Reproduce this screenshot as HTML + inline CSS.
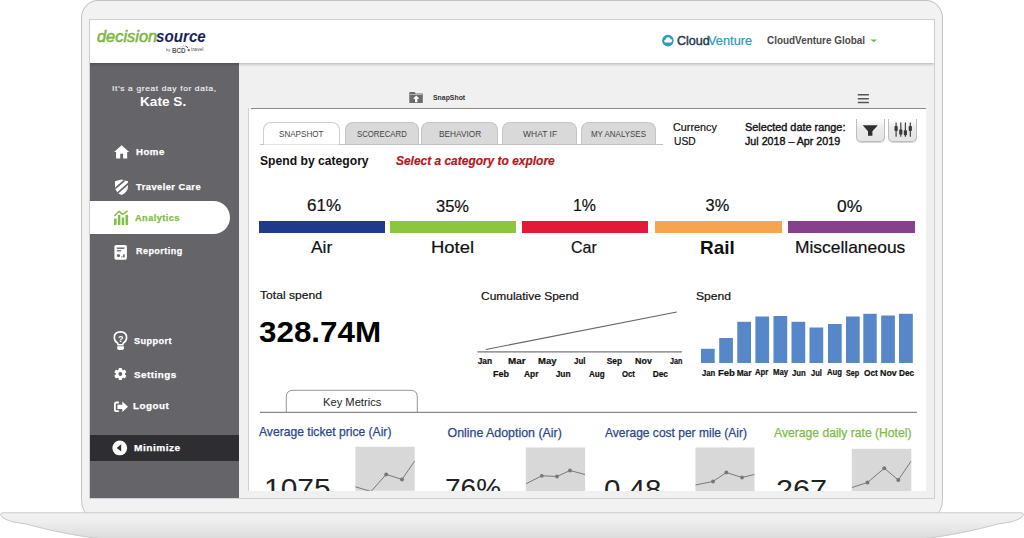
<!DOCTYPE html>
<html lang="en"><head><meta charset="utf-8"><title>DecisionSource Analytics</title>
<style>
html,body{margin:0;padding:0;background:#fff;}
body{width:1024px;height:538px;overflow:hidden;position:relative;font-family:"Liberation Sans",sans-serif;}
.abs{position:absolute;}
.t{position:absolute;white-space:nowrap;line-height:1;transform-origin:0 0;font-family:"Liberation Sans",sans-serif;}
#frame{position:absolute;left:81px;top:0;width:862px;height:513.5px;box-sizing:border-box;border:1px solid #c4c4c4;border-radius:17px 17px 7px 7px / 18px 18px 15px 15px;background:#f2f2f2;}
#screen{position:absolute;z-index:0;left:90px;top:20px;width:844px;height:478.4px;background:#f0f0f1;overflow:hidden;box-shadow:0 0 0 1px #cfcfcf;}
#hdr{position:absolute;left:0;top:0;width:100%;height:42.6px;background:#fff;box-shadow:0 1px 3px rgba(0,0,0,.28);z-index:3;}
#side{position:absolute;left:0;top:42.6px;width:148.6px;height:437px;background:#656469;z-index:2;}
#pill{position:absolute;left:0;top:138.2px;width:140px;height:33px;background:#fff;border-radius:0 17px 17px 0;}
#mini{position:absolute;left:0;top:372.7px;width:148.6px;height:25.6px;background:#2e2d31;}
#panel{position:absolute;left:157.5px;top:88px;width:678.7px;height:382.6px;background:#fff;border-left:1px solid #d2d2d2;box-sizing:border-box;overflow:hidden;}
#ptop{position:absolute;left:161px;top:88px;width:675.2px;height:1px;background:#8a8a8a;}
.tab{position:absolute;top:122px;height:22.6px;box-sizing:border-box;background:#d9d9d9;border:1px solid #c4c4c4;border-bottom:none;border-radius:8px 8px 0 0;}
.tab.on{background:#fff;border-color:#cfcfcf;}
.bar{position:absolute;top:221px;height:11.7px;}
.spk{position:absolute;background:#d8d8d8;}
.btn{position:absolute;top:118.5px;height:23.2px;box-sizing:border-box;border:1px solid #bdbdbd;border-top:none;border-radius:0 0 5px 5px;background:linear-gradient(#fff,#ebebeb 40%,#e4e4e4);box-shadow:0 1px 0 #d6d6d6;}
</style></head><body>
<div id="frame"></div>
<svg class="abs" style="left:0;top:505px" width="1024" height="33" viewBox="0 505 1024 33">
<defs><linearGradient id="bg" gradientUnits="userSpaceOnUse" x1="0" y1="513" x2="0" y2="538"><stop offset="0" stop-color="#f2f2f2"/><stop offset="0.35" stop-color="#eeeeee"/><stop offset="1" stop-color="#dcdcdc"/></linearGradient></defs>
<path d="M0.5,514.8 Q0.3,512.8 3,512.8 L1021,512.8 Q1023.7,512.8 1023.5,514.8 C1021,519.5 1012,522.5 999,523.7 C974,530.7 949,535.5 929,538 L918,540 L106,540 L95,538 C75,535.5 50,530.7 25,523.7 C12,522.5 3,519.5 0.5,514.8 Z" fill="url(#bg)" stroke="#c9c9c9" stroke-width="1"/>
</svg>
<div id="screen">
 <div id="hdr"></div>
 <div id="side"><div id="pill"></div><div id="mini"></div></div>
 <div id="panel"></div><div id="ptop"></div>
</div>
<!-- tabs -->
<div class="tab on" style="left:263px;width:76.5px"></div>
<div class="tab" style="left:344.5px;width:74.5px"></div>
<div class="tab" style="left:421px;width:76.5px"></div>
<div class="tab" style="left:502px;width:75px"></div>
<div class="tab" style="left:581px;width:75px"></div>
<div class="abs" style="left:260px;top:144.2px;width:403px;height:1px;background:#c2c2c2"></div>
<div class="abs" style="left:264px;top:144.2px;width:74.5px;height:1px;background:#e4e4e4"></div>
<!-- buttons -->
<div class="btn" style="left:856.3px;width:28.7px"></div>
<div class="btn" style="left:888.2px;width:28.9px"></div>
<!-- category bars -->
<div class="bar" style="left:258.8px;width:126.4px;background:#1f3a8c"></div>
<div class="bar" style="left:389.5px;width:126.8px;background:#8cc63f"></div>
<div class="bar" style="left:522px;width:125.6px;background:#e21a38"></div>
<div class="bar" style="left:655.2px;width:126.8px;background:#f7a44e"></div>
<div class="bar" style="left:788px;width:126.8px;background:#86408c"></div>
<!-- charts -->
<svg class="abs" style="left:0;top:0" width="1024" height="538" viewBox="0 0 1024 538">
 <line x1="477.5" y1="351.9" x2="682" y2="351.9" stroke="#777" stroke-width="1.25"/>
 <line x1="485.8" y1="349.5" x2="676.8" y2="312" stroke="#666" stroke-width="1.05"/>
 <g fill="#5687c8">
  <rect x="701" y="348.8" width="13.7" height="14.2"/>
  <rect x="719.2" y="338" width="13.7" height="25.0"/>
  <rect x="737.3" y="321.8" width="13.7" height="41.2"/>
  <rect x="755.4" y="316.5" width="13.7" height="46.5"/>
  <rect x="773.5" y="316" width="13.7" height="47.0"/>
  <rect x="791.5" y="321.8" width="13.7" height="41.2"/>
  <rect x="809.5" y="327.5" width="13.7" height="35.5"/>
  <rect x="828" y="324" width="13.7" height="39.0"/>
  <rect x="846" y="316.5" width="13.7" height="46.5"/>
  <rect x="863.3" y="313.8" width="13.4" height="49.2"/>
  <rect x="881.2" y="315.5" width="13.7" height="47.5"/>
  <rect x="899" y="313.8" width="13.8" height="49.2"/>
 </g>
 <!-- key metrics tab + line -->
 <path d="M286.3,412 L286.3,397 Q286.3,390.3 293,390.3 L410.5,390.3 Q417.3,390.3 417.3,397 L417.3,412" fill="none" stroke="#8a8a8a" stroke-width="0.9"/>
 <line x1="260" y1="412.3" x2="917" y2="412.3" stroke="#6f6f6f" stroke-width="1"/>
</svg>
<!-- sparklines -->
<svg class="abs" style="left:0;top:0" width="1024" height="490.6" viewBox="0 0 1024 490.6">
 <rect x="355.4" y="446.8" width="59.3" height="44" fill="#d8d8d8"/>
 <rect x="525.8" y="447.5" width="59.3" height="44" fill="#d8d8d8"/>
 <rect x="695.5" y="447.5" width="59" height="44" fill="#d8d8d8"/>
 <rect x="851.8" y="448.8" width="59.5" height="44" fill="#d8d8d8"/>
 <g fill="none" stroke="#6e6e6e" stroke-width="0.9">
  <polyline points="355.4,486.8 371,491.5 386.2,474.4 402,479.4 414.7,461"/>
  <polyline points="526,483.8 541.8,475.8 557,476.5 570,470.5 585,474.5"/>
  <polyline points="695.5,485 713,481.5 726.3,472.5 742,477.5 754.5,474.5"/>
  <polyline points="852,487.5 867.5,482.5 884.3,468.3 898.3,480 911,461.3"/>
 </g>
 <g fill="#777">
  <circle cx="386.2" cy="474.4" r="2"/><circle cx="402" cy="479.4" r="2"/>
  <circle cx="541.8" cy="475.8" r="1.9"/><circle cx="557" cy="476.5" r="1.9"/><circle cx="570" cy="470.5" r="1.9"/>
  <circle cx="713" cy="481.5" r="1.9"/><circle cx="726.3" cy="472.5" r="1.9"/><circle cx="742" cy="477.5" r="1.9"/>
  <circle cx="867.5" cy="482.5" r="1.9"/><circle cx="884.3" cy="468.3" r="2"/><circle cx="898.3" cy="480" r="2"/>
 </g>
</svg>
<div class="abs" id="textclip" style="left:0;top:0;width:1024px;height:490.6px;overflow:hidden">
<span id="t0" class="t" style="left:96.65px;top:28.30px;font-size:16.3px;transform:scaleX(1.0070);font-style:italic;color:#7ab642;-webkit-text-stroke:0.55px #7ab642">decision</span>
<span id="t1" class="t" style="left:156.25px;top:28.30px;font-size:16.3px;transform:scaleX(0.9327);font-style:italic;font-weight:bold;color:#1c1f5c">source</span>
<span id="t2" class="t" style="left:166.28px;top:48.04px;font-size:4.2px;transform:scaleX(0.9506);color:#555">by</span>
<span id="t3" class="t" style="left:172.24px;top:47.80px;font-size:6.5px;transform:scaleX(0.9716);font-weight:bold;color:#5a5a5a">BCD</span>
<span id="t4" class="t" style="left:190.62px;top:48.11px;font-size:4.6px;transform:scaleX(1.1102);color:#555">travel</span>
<span id="t5" class="t" style="left:676.68px;top:34.20px;font-size:13px;transform:scaleX(0.9640);color:#1f3b4d;-webkit-text-stroke:0.45px #1f3b4d">Cloud</span>
<span id="t6" class="t" style="left:708.48px;top:34.20px;font-size:13px;transform:scaleX(0.9867);color:#2a9ab3;-webkit-text-stroke:0.2px #2a9ab3">Venture</span>
<span id="t7" class="t" style="left:766.74px;top:35.78px;font-size:10.3px;transform:scaleX(0.9624);font-weight:bold;color:#4a4a4a">CloudVenture Global</span>
<span id="t8" class="t" style="left:111.78px;top:85.11px;font-size:7.9px;transform:scaleX(1.0651);color:#f2f2f2;letter-spacing:0.6px;-webkit-text-stroke:0.15px #f2f2f2">It&rsquo;s a great day for data,</span>
<span id="t9" class="t" style="left:140.28px;top:95.00px;font-size:13px;transform:scaleX(1.0476);font-weight:bold;color:#fff">Kate S.</span>
<span id="t10" class="t" style="left:135.74px;top:147.50px;font-size:9.1px;transform:scaleX(1.0625);font-weight:bold;color:#fff;letter-spacing:0.45px;-webkit-text-stroke:0.25px #fff">Home</span>
<span id="t11" class="t" style="left:135.74px;top:182.50px;font-size:9.1px;transform:scaleX(1.0254);font-weight:bold;color:#fff;letter-spacing:0.45px;-webkit-text-stroke:0.25px #fff">Traveler Care</span>
<span id="t12" class="t" style="left:135.09px;top:213.50px;font-size:9.1px;transform:scaleX(1.0093);font-weight:bold;color:#82bd45;letter-spacing:0.45px;-webkit-text-stroke:0.25px #82bd45">Analytics</span>
<span id="t13" class="t" style="left:135.94px;top:246.60px;font-size:9.1px;transform:scaleX(0.9913);font-weight:bold;color:#fff;letter-spacing:0.45px;-webkit-text-stroke:0.25px #fff">Reporting</span>
<span id="t14" class="t" style="left:134.44px;top:337.10px;font-size:9.1px;transform:scaleX(1.0007);font-weight:bold;color:#fff;letter-spacing:0.45px;-webkit-text-stroke:0.25px #fff">Support</span>
<span id="t15" class="t" style="left:133.84px;top:371.00px;font-size:9.1px;transform:scaleX(1.0823);font-weight:bold;color:#fff;letter-spacing:0.45px;-webkit-text-stroke:0.25px #fff">Settings</span>
<span id="t16" class="t" style="left:133.44px;top:401.50px;font-size:9.1px;transform:scaleX(1.0794);font-weight:bold;color:#fff;letter-spacing:0.45px;-webkit-text-stroke:0.25px #fff">Logout</span>
<span id="t17" class="t" style="left:134.09px;top:443.50px;font-size:9.1px;transform:scaleX(1.1122);font-weight:bold;color:#fff;letter-spacing:0.45px;-webkit-text-stroke:0.25px #fff">Minimize</span>
<span id="t18" class="t" style="left:433.31px;top:94.31px;font-size:7.2px;transform:scaleX(0.9582);font-weight:bold;color:#333">SnapShot</span>
<span id="t19" class="t" style="left:278.60px;top:129.84px;font-size:8.7px;transform:scaleX(0.9304);color:#444">SNAPSHOT</span>
<span id="t20" class="t" style="left:356.95px;top:129.84px;font-size:8.7px;transform:scaleX(0.8963);color:#444">SCORECARD</span>
<span id="t21" class="t" style="left:438.65px;top:129.84px;font-size:8.7px;transform:scaleX(0.9529);color:#444">BEHAVIOR</span>
<span id="t22" class="t" style="left:522.60px;top:129.84px;font-size:8.7px;transform:scaleX(0.9765);color:#444">WHAT IF</span>
<span id="t23" class="t" style="left:590.95px;top:129.84px;font-size:8.7px;transform:scaleX(0.9153);color:#444">MY ANALYSES</span>
<span id="t24" class="t" style="left:673.35px;top:122.03px;font-size:11.3px;transform:scaleX(0.9570);color:#111;-webkit-text-stroke:0.2px #111">Currency</span>
<span id="t25" class="t" style="left:673.75px;top:136.03px;font-size:11.3px;transform:scaleX(0.9091);color:#111;-webkit-text-stroke:0.2px #111">USD</span>
<span id="t26" class="t" style="left:744.85px;top:122.03px;font-size:11.3px;transform:scaleX(0.9631);color:#111;-webkit-text-stroke:0.4px #111">Selected date range:</span>
<span id="t27" class="t" style="left:745.40px;top:136.03px;font-size:11.3px;transform:scaleX(0.9461);color:#111;-webkit-text-stroke:0.4px #111">Jul 2018 &ndash; Apr 2019</span>
<span id="t28" class="t" style="left:259.98px;top:154.30px;font-size:13px;transform:scaleX(0.9339);font-weight:bold;color:#111">Spend by category</span>
<span id="t29" class="t" style="left:396.15px;top:154.63px;font-size:12.6px;transform:scaleX(0.9485);font-weight:bold;font-style:italic;color:#b8151b;-webkit-text-stroke:0.2px #b8151b">Select a category to explore</span>
<span id="t30" class="t" style="left:306.94px;top:196.72px;font-size:16.4px;transform:scaleX(1.0389);color:#111;-webkit-text-stroke:0.2px #111">61%</span>
<span id="t31" class="t" style="left:436.19px;top:197.92px;font-size:16.4px;transform:scaleX(1.0072);color:#111;-webkit-text-stroke:0.2px #111">35%</span>
<span id="t32" class="t" style="left:573.09px;top:196.72px;font-size:16.4px;transform:scaleX(0.9729);color:#111;-webkit-text-stroke:0.2px #111">1%</span>
<span id="t33" class="t" style="left:705.54px;top:196.92px;font-size:16.4px;transform:scaleX(1.0000);color:#111;-webkit-text-stroke:0.2px #111">3%</span>
<span id="t34" class="t" style="left:837.04px;top:197.72px;font-size:16.4px;transform:scaleX(1.0637);color:#111;-webkit-text-stroke:0.2px #111">0%</span>
<span id="t35" class="t" style="left:310.84px;top:239.95px;font-size:16.6px;transform:scaleX(1.0500);color:#111;-webkit-text-stroke:0.2px #111">Air</span>
<span id="t36" class="t" style="left:431.34px;top:239.95px;font-size:16.6px;transform:scaleX(1.1118);color:#111;-webkit-text-stroke:0.2px #111">Hotel</span>
<span id="t37" class="t" style="left:571.19px;top:239.95px;font-size:16.6px;transform:scaleX(0.9692);color:#111;-webkit-text-stroke:0.2px #111">Car</span>
<span id="t38" class="t" style="left:699.84px;top:237.72px;font-size:19px;transform:scaleX(0.9941);font-weight:bold;color:#111">Rail</span>
<span id="t39" class="t" style="left:794.84px;top:239.95px;font-size:16.6px;transform:scaleX(1.0486);color:#111;-webkit-text-stroke:0.2px #111">Miscellaneous</span>
<span id="t40" class="t" style="left:259.99px;top:289.38px;font-size:11.6px;transform:scaleX(1.0441);color:#111;-webkit-text-stroke:0.2px #111">Total spend</span>
<span id="t41" class="t" style="left:481.04px;top:289.68px;font-size:11.6px;transform:scaleX(1.0320);color:#111;-webkit-text-stroke:0.2px #111">Cumulative Spend</span>
<span id="t42" class="t" style="left:696.34px;top:289.68px;font-size:11.6px;transform:scaleX(1.0438);color:#111;-webkit-text-stroke:0.2px #111">Spend</span>
<span id="t43" class="t" style="left:258.95px;top:318.22px;font-size:28.8px;transform:scaleX(1.0899);font-weight:bold;color:#000">328.74M</span>
<span id="t44" class="t" style="left:477.66px;top:357.49px;font-size:8.4px;transform:scaleX(1.0000);font-weight:bold;color:#111;-webkit-text-stroke:0.2px #111">Jan</span>
<span id="t45" class="t" style="left:507.66px;top:357.49px;font-size:8.4px;transform:scaleX(1.1716);font-weight:bold;color:#111;-webkit-text-stroke:0.2px #111">Mar</span>
<span id="t46" class="t" style="left:538.41px;top:357.49px;font-size:8.4px;transform:scaleX(1.1343);font-weight:bold;color:#111;-webkit-text-stroke:0.2px #111">May</span>
<span id="t47" class="t" style="left:573.66px;top:357.49px;font-size:8.4px;transform:scaleX(0.9503);font-weight:bold;color:#111;-webkit-text-stroke:0.2px #111">Jul</span>
<span id="t48" class="t" style="left:606.66px;top:357.49px;font-size:8.4px;transform:scaleX(1.0000);font-weight:bold;color:#111;-webkit-text-stroke:0.2px #111">Sep</span>
<span id="t49" class="t" style="left:635.16px;top:357.49px;font-size:8.4px;transform:scaleX(1.0667);font-weight:bold;color:#111;-webkit-text-stroke:0.2px #111">Nov</span>
<span id="t50" class="t" style="left:669.91px;top:357.49px;font-size:8.4px;transform:scaleX(0.8585);font-weight:bold;color:#111;-webkit-text-stroke:0.2px #111">Jan</span>
<span id="t51" class="t" style="left:493.16px;top:370.49px;font-size:8.4px;transform:scaleX(1.0714);font-weight:bold;color:#111;-webkit-text-stroke:0.2px #111">Feb</span>
<span id="t52" class="t" style="left:524.41px;top:370.49px;font-size:8.4px;transform:scaleX(1.0012);font-weight:bold;color:#111;-webkit-text-stroke:0.2px #111">Apr</span>
<span id="t53" class="t" style="left:555.66px;top:370.49px;font-size:8.4px;transform:scaleX(1.0000);font-weight:bold;color:#111;-webkit-text-stroke:0.2px #111">Jun</span>
<span id="t54" class="t" style="left:588.66px;top:370.49px;font-size:8.4px;transform:scaleX(0.9627);font-weight:bold;color:#111;-webkit-text-stroke:0.2px #111">Aug</span>
<span id="t55" class="t" style="left:622.16px;top:370.49px;font-size:8.4px;transform:scaleX(0.9286);font-weight:bold;color:#111;-webkit-text-stroke:0.2px #111">Oct</span>
<span id="t56" class="t" style="left:652.66px;top:370.49px;font-size:8.4px;transform:scaleX(1.0000);font-weight:bold;color:#111;-webkit-text-stroke:0.2px #111">Dec</span>
<span id="t57" class="t" style="left:702.17px;top:368.97px;font-size:8.3px;transform:scaleX(0.9286);font-weight:bold;color:#111;-webkit-text-stroke:0.2px #111">Jan</span>
<span id="t58" class="t" style="left:718.17px;top:368.97px;font-size:8.3px;transform:scaleX(1.1480);font-weight:bold;color:#111;-webkit-text-stroke:0.2px #111">Feb</span>
<span id="t59" class="t" style="left:736.67px;top:368.97px;font-size:8.3px;transform:scaleX(1.0000);font-weight:bold;color:#111;-webkit-text-stroke:0.2px #111">Mar</span>
<span id="t60" class="t" style="left:755.17px;top:367.97px;font-size:8.3px;transform:scaleX(0.9286);font-weight:bold;color:#111;-webkit-text-stroke:0.2px #111">Apr</span>
<span id="t61" class="t" style="left:773.42px;top:367.97px;font-size:8.3px;transform:scaleX(0.9385);font-weight:bold;color:#111;-webkit-text-stroke:0.2px #111">May</span>
<span id="t62" class="t" style="left:792.42px;top:368.97px;font-size:8.3px;transform:scaleX(0.9346);font-weight:bold;color:#111;-webkit-text-stroke:0.2px #111">Jun</span>
<span id="t63" class="t" style="left:811.17px;top:368.97px;font-size:8.3px;transform:scaleX(0.9091);font-weight:bold;color:#111;-webkit-text-stroke:0.2px #111">Jul</span>
<span id="t64" class="t" style="left:826.92px;top:367.97px;font-size:8.3px;transform:scaleX(0.9344);font-weight:bold;color:#111;-webkit-text-stroke:0.2px #111">Aug</span>
<span id="t65" class="t" style="left:845.92px;top:368.97px;font-size:8.3px;transform:scaleX(0.8679);font-weight:bold;color:#111;-webkit-text-stroke:0.2px #111">Sep</span>
<span id="t66" class="t" style="left:863.67px;top:368.97px;font-size:8.3px;transform:scaleX(1.0051);font-weight:bold;color:#111;-webkit-text-stroke:0.2px #111">Oct</span>
<span id="t67" class="t" style="left:879.92px;top:368.97px;font-size:8.3px;transform:scaleX(1.0678);font-weight:bold;color:#111;-webkit-text-stroke:0.2px #111">Nov</span>
<span id="t68" class="t" style="left:898.92px;top:368.97px;font-size:8.3px;transform:scaleX(1.0012);font-weight:bold;color:#111;-webkit-text-stroke:0.2px #111">Dec</span>
<span id="t69" class="t" style="left:322.54px;top:395.78px;font-size:11.6px;transform:scaleX(0.9628);color:#222">Key Metrics</span>
<span id="t70" class="t" style="left:258.75px;top:426.30px;font-size:12.4px;transform:scaleX(0.9778);color:#2a478a;-webkit-text-stroke:0.25px #2a478a">Average ticket price (Air)</span>
<span id="t71" class="t" style="left:447.50px;top:426.50px;font-size:12.4px;transform:scaleX(1.0000);color:#2a478a;-webkit-text-stroke:0.25px #2a478a">Online Adoption (Air)</span>
<span id="t72" class="t" style="left:604.70px;top:427.30px;font-size:12.4px;transform:scaleX(0.9697);color:#2a478a;-webkit-text-stroke:0.25px #2a478a">Average cost per mile (Air)</span>
<span id="t73" class="t" style="left:773.70px;top:427.30px;font-size:12.4px;transform:scaleX(0.9799);color:#7dbb42;-webkit-text-stroke:0.25px #7dbb42">Average daily rate (Hotel)</span>
<span id="t74" class="t" style="left:264.36px;top:474.37px;font-size:28.5px;transform:scaleX(1.0500);color:#222">1075</span>
<span id="t75" class="t" style="left:445.11px;top:474.37px;font-size:28.5px;transform:scaleX(0.9819);color:#222">76%</span>
<span id="t76" class="t" style="left:604.11px;top:474.87px;font-size:28.5px;transform:scaleX(1.0371);color:#222">0.48</span>
<span id="t77" class="t" style="left:776.36px;top:474.87px;font-size:28.5px;transform:scaleX(1.0763);color:#222">267</span>
</div>
<svg class="abs" style="left:0;top:0" width="1024" height="538" viewBox="0 0 1024 538">
 <!-- cloud logo -->
 <circle cx="667.9" cy="40.6" r="5.8" fill="#2f9db4"/>
 <path d="M665.6,42.6 Q664.2,42.6 664.2,41.1 Q664.2,39.8 665.6,39.6 Q666,37.3 668.2,37.3 Q670,37.3 670.6,39 Q672.2,39 672.2,40.8 Q672.2,42.6 670.6,42.6 Z" fill="#fff"/>
 <!-- green caret -->
 <path d="M870.4,39.6 L877.2,39.6 L873.8,42.3 Z" fill="#7ab642"/>
 <!-- BCD dots -->
 <g fill="#555"><circle cx="180.9" cy="46.8" r="0.4"/><circle cx="182.2" cy="46.1" r="0.4"/><circle cx="183.7" cy="45.8" r="0.45"/><circle cx="185.2" cy="46" r="0.5"/><circle cx="186.5" cy="46.6" r="0.6"/><circle cx="187.4" cy="47.5" r="0.65"/><circle cx="188.7" cy="50.1" r="1.15"/></g>
 <!-- home -->
 <path d="M121.6,145.2 L129.2,152 L127.2,152 L127.2,158.4 L123.1,158.4 L123.1,153.8 L120.2,153.8 L120.2,158.4 L116.1,158.4 L116.1,152 L114.1,152 Z" fill="#fff"/>
 <!-- shield -->
 <g>
  <clipPath id="shc"><path d="M121.5,179.4 L128,181.3 L128,186.7 Q128,192 121.5,195 Q115,192 115,186.7 L115,181.3 Z"/></clipPath>
  <path d="M121.5,179.4 L128,181.3 L128,186.7 Q128,192 121.5,195 Q115,192 115,186.7 L115,181.3 Z" fill="#fff"/>
  <g clip-path="url(#shc)" stroke="#656469" stroke-width="1.7"><line x1="113" y1="190.3" x2="127" y2="178.3"/><line x1="115" y1="195.3" x2="131" y2="181.3"/></g>
 </g>
 <!-- analytics -->
 <g fill="#82bd45">
  <rect x="114" y="218.5" width="2.6" height="6.4" rx="0.4"/><rect x="117.9" y="214.9" width="2.5" height="10" rx="0.4"/><rect x="121.7" y="217.5" width="2.5" height="7.4" rx="0.4"/><rect x="125.5" y="214.9" width="2.6" height="10" rx="0.4"/>
 </g>
 <polyline points="114.8,215.5 119.1,211.3 122.7,214.3 127.2,211.2" fill="none" stroke="#82bd45" stroke-width="1.5" stroke-linecap="round" stroke-linejoin="round"/>
 <!-- reporting -->
 <g>
  <rect x="114.4" y="244.9" width="12.5" height="14.9" rx="1.7" fill="#fff"/>
  <rect x="116.9" y="247.5" width="7.5" height="1.4" fill="#656469"/><rect x="116.9" y="250.1" width="4.2" height="1.3" fill="#656469"/>
  <circle cx="118.5" cy="255.6" r="1.6" fill="#656469"/><rect x="121.3" y="256.3" width="1.2" height="1.1" fill="#656469"/><rect x="123.1" y="254.4" width="1.6" height="3" fill="#656469"/>
 </g>
 <!-- support bulb -->
 <path d="M118.1,344.7 L117.7,343.2 Q114.3,341.2 114.3,337.7 Q114.3,331.9 120.45,331.9 Q126.6,331.9 126.6,337.7 Q126.6,341.2 123.2,343.2 L122.8,344.7 Z" fill="none" stroke="#fff" stroke-width="1.6" stroke-linejoin="round"/>
 <path d="M117.2,346.2 L123.9,346.2 L123.9,348.2 Q123.9,349.9 122.2,349.9 L118.9,349.9 Q117.2,349.9 117.2,348.2 Z" fill="#fff"/>
 <!-- gear -->
 <g transform="translate(120.35,374)">
  <g fill="#fff">
   <circle r="4.7"/>
   <rect x="-1.6" y="-6.1" width="3.2" height="12.2" rx="0.6"/>
   <rect x="-1.6" y="-6.1" width="3.2" height="12.2" rx="0.6" transform="rotate(60)"/>
   <rect x="-1.6" y="-6.1" width="3.2" height="12.2" rx="0.6" transform="rotate(120)"/>
  </g>
  <circle r="1.9" fill="#656469"/>
 </g>
 <!-- logout -->
 <g>
  <path d="M118.9,402.5 L116.6,402.5 Q114.9,402.5 114.9,404.2 L114.9,409.4 Q114.9,411.1 116.6,411.1 L118.9,411.1" fill="none" stroke="#fff" stroke-width="1.8"/>
  <path d="M117.4,404.7 L122.3,404.7 L122.3,401.5 L128,406.8 L122.3,412.1 L122.3,408.9 L117.4,408.9 Z" fill="#fff"/>
 </g>
 <!-- minimize -->
 <circle cx="119.75" cy="447.9" r="7.4" fill="#fff"/><path d="M121.2,444.2 L121.2,451.6 L116.7,447.9 Z" fill="#2e2d31"/>
 <!-- folder -->
 <g>
  <path d="M409.3,92.7 Q409.3,91.9 410.1,91.9 L414.2,91.9 Q414.9,91.9 415.2,92.6 L415.6,93.6 L422.8,93.6 L422.8,103 L409.3,103 Z" fill="#6b6b6b"/>
  <rect x="409.9" y="94.2" width="12.3" height="0.7" fill="#e8e8e8" opacity="0.8"/>
  <path d="M416.2,95.6 L419.4,98.8 L417.4,98.8 L417.4,102.3 L415,102.3 L415,98.8 L413,98.8 Z" fill="#fff"/>
 </g>
 <!-- hamburger -->
 <g fill="#555"><rect x="857.7" y="94" width="11.3" height="1.5" rx="0.6"/><rect x="857.7" y="97.9" width="11.3" height="1.5" rx="0.6"/><rect x="857.7" y="101.8" width="11.3" height="1.5" rx="0.6"/></g>
 <!-- funnel -->
 <path d="M862.7,125.2 L877.8,125.2 L872.4,131.2 L872.4,135.8 L868,135.8 L868,131.2 Z" fill="#2f2f2f"/>
 <!-- sliders -->
 <g stroke="#3a3a3a" stroke-width="1.15"><line x1="896.1" y1="122.5" x2="896.1" y2="136.7"/><line x1="900.8" y1="122.5" x2="900.8" y2="136.7"/><line x1="905.4" y1="122.5" x2="905.4" y2="136.7"/><line x1="910.3" y1="122.5" x2="910.3" y2="136.7"/></g>
 <g fill="#3a3a3a"><rect x="894.5" y="126" width="3.2" height="5" rx="0.7"/><rect x="899.2" y="129.6" width="3.2" height="5" rx="0.7"/><rect x="903.8" y="130.2" width="3.2" height="5" rx="0.7"/><rect x="908.7" y="126" width="3.2" height="5" rx="0.7"/></g>
</svg>
<span class="q" style="position:absolute;left:118px;top:334.6px;font-size:9px;line-height:1;font-weight:bold;color:#fff;font-family:'Liberation Sans',sans-serif">?</span>

</body></html>
